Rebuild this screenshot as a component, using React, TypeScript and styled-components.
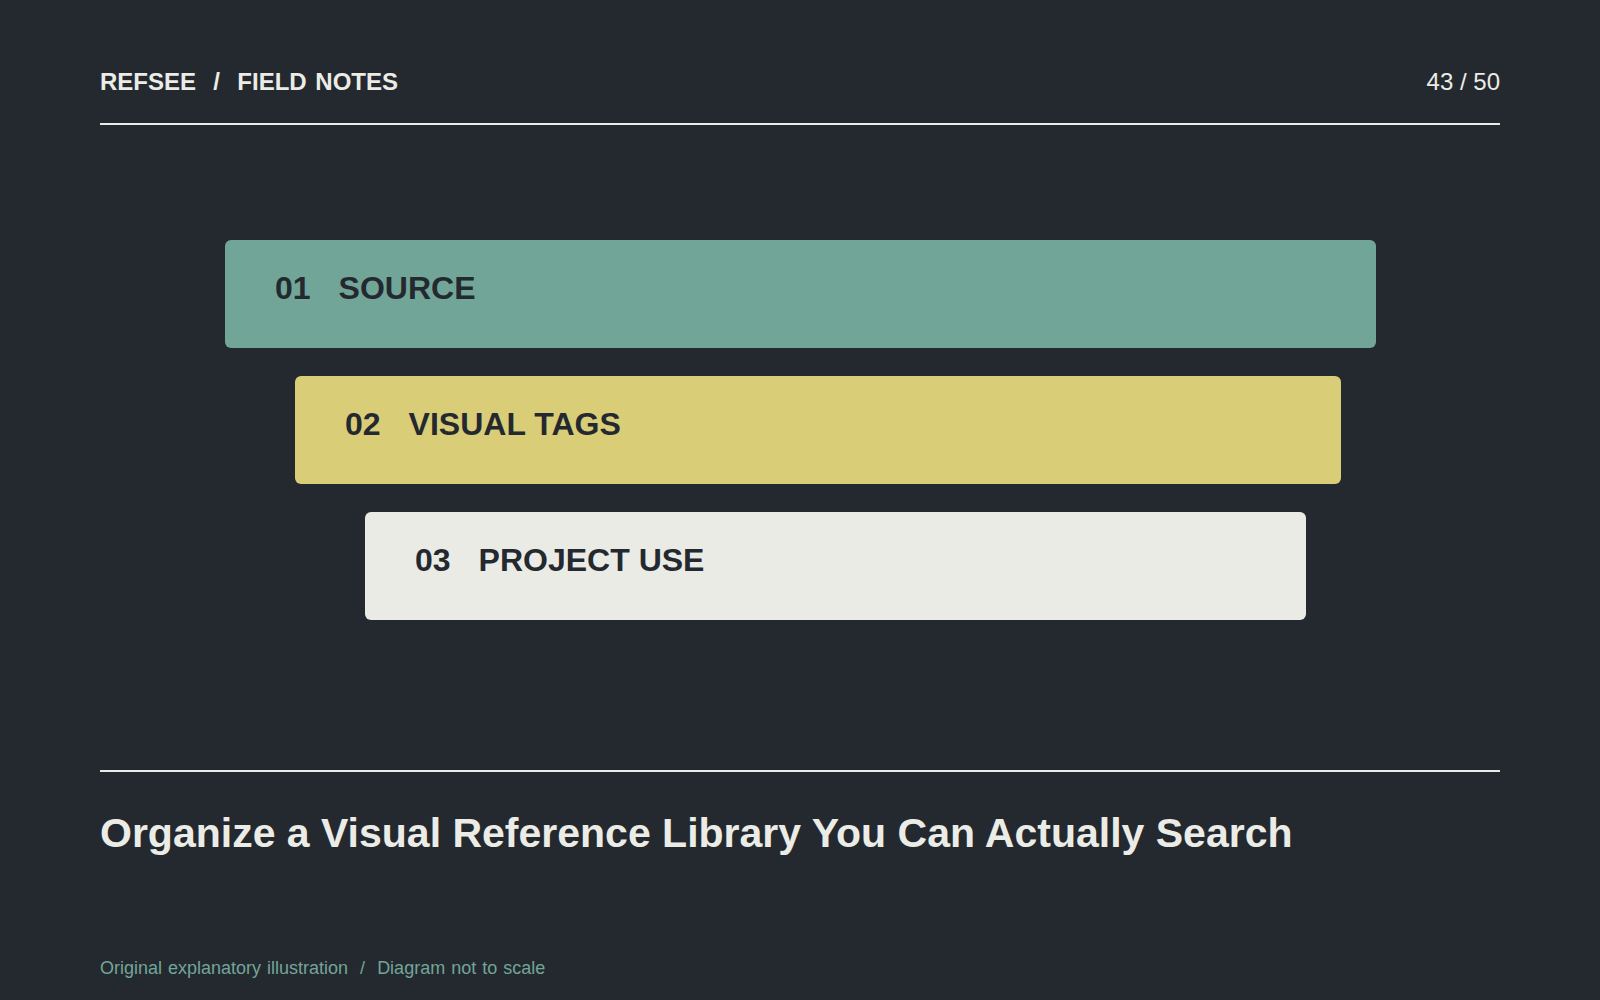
import React from 'react';
import styled, { createGlobalStyle } from 'styled-components';

const Global = createGlobalStyle`
  html, body { margin: 0; background: #242930; }
  body { font-family: "Liberation Sans", Arial, sans-serif; }
`;

const Page = styled.div`
  width: 1600px;
  height: 1000px;
  box-sizing: border-box;
  padding: 0 100px;
  display: flex;
  flex-direction: column;
  color: #ecece6;
`;

const Header = styled.header`
  height: 125px;
  box-sizing: border-box;
  padding-top: 68px;
  display: flex;
  justify-content: space-between;
  align-items: flex-start;
  border-bottom: 2px solid #ecece6;
`;

const Brand = styled.div`
  font-size: 24px;
  font-weight: 700;
  word-spacing: 2px;
`;

const PageNum = styled.div`
  font-size: 24px;
`;

const Stack = styled.div`
  margin-top: 115px;
  display: flex;
  flex-direction: column;
  gap: 28px;
`;

const Bar = styled.div<{ $bg: string; $left: number; $width: number }>`
  margin-left: ${p => p.$left}px;
  width: ${p => p.$width}px;
  height: 108px;
  box-sizing: border-box;
  background: ${p => p.$bg};
  border-radius: 6px;
  padding: 30px 50px 0;
  display: flex;
  gap: 28px;
  font-size: 32px;
  font-weight: 700;
  color: #242930;
`;

const Rule = styled.div`
  margin-top: 150px;
  height: 2px;
  background: #ecece6;
`;

const Title = styled.h1`
  margin: 38px 0 0;
  font-size: 41px;
  font-weight: 700;
  color: #ecece6;
`;

const Footer = styled.div`
  margin-top: auto;
  margin-bottom: 21px;
  font-size: 18px;
  color: #72a597;
  word-spacing: 1px;
`;

const bars = [
  { n: '01', t: 'SOURCE', bg: '#71a598', left: 125, width: 1151 },
  { n: '02', t: 'VISUAL TAGS', bg: '#dacd78', left: 195, width: 1046 },
  { n: '03', t: 'PROJECT USE', bg: '#ebebe6', left: 265, width: 941 },
];

export default function App() {
  return (
    <Page>
      <Global />
      <Header>
        <Brand>REFSEE &nbsp;/&nbsp; FIELD NOTES</Brand>
        <PageNum>43 / 50</PageNum>
      </Header>
      <Stack>
        {bars.map(b => (
          <Bar key={b.n} $bg={b.bg} $left={b.left} $width={b.width}>
            <span>{b.n}</span>
            <span>{b.t}</span>
          </Bar>
        ))}
      </Stack>
      <Rule />
      <Title>Organize a Visual Reference Library You Can Actually Search</Title>
      <Footer>Original explanatory illustration &nbsp;/&nbsp; Diagram not to scale</Footer>
    </Page>
  );
}
